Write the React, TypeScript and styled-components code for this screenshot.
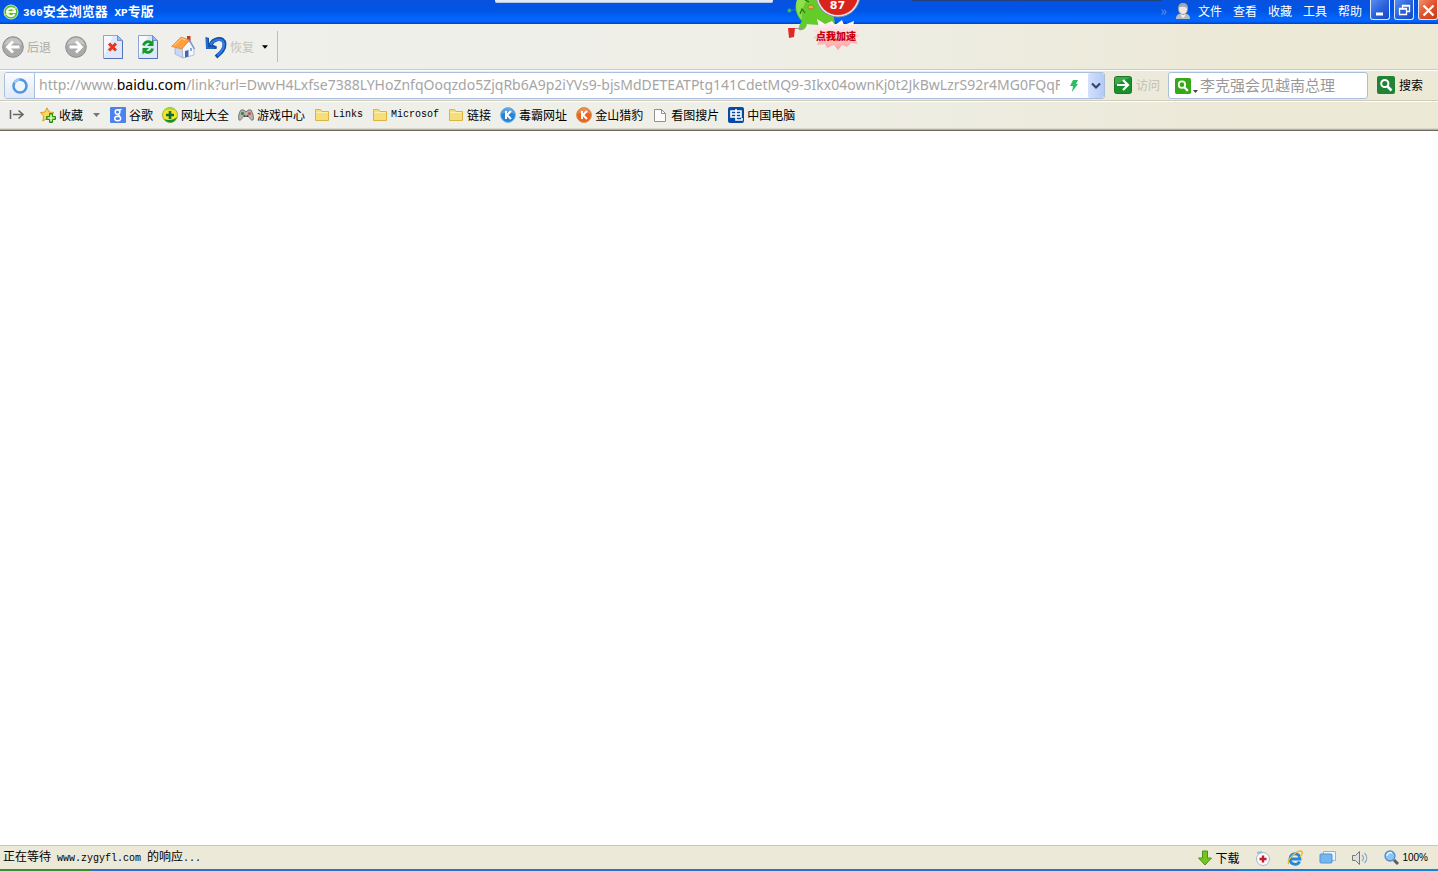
import React from 'react';
import styled, { createGlobalStyle } from 'styled-components';

const cjk = `"Noto Sans CJK SC", sans-serif`;

const GlobalStyle = createGlobalStyle`
  * { box-sizing: border-box; }
  body { margin: 0; background: #fff; font: 12px/16px ${cjk}; color: #000; }
  button, input { font: inherit; color: inherit; margin: 0; padding: 0; border: 0; background: none; }
  button { display: flex; align-items: center; cursor: pointer; white-space: nowrap; }
  svg { display: block; flex: none; }
`;

const Window = styled.div`
  display: flex;
  flex-direction: column;
  min-height: 100vh;
  overflow: hidden;
`;

const TitleBar = styled.header`
  position: relative;
  display: flex;
  justify-content: space-between;
  height: 24px;
  padding-left: 3px;
  color: #fff;
  background: linear-gradient(#0a50d8 0, #0553e4 3px, #0054e3 10px, #0264fb 18px, #0566ff 21px, #0040c4 24px);
`;

const Title = styled.h1`
  display: flex;
  align-items: center;
  gap: 4px;
  margin: 0;
  font-size: 13px;
  line-height: 24px;
  font-weight: 700;
  white-space: pre;
`;

const Latin = styled.span`
  font-family: "Liberation Mono", monospace;
  font-size: 10px;
`;

const TitleLatin = styled.span`
  font-family: "Liberation Mono", monospace;
  font-size: 11px;
`;

const TitleRight = styled.div`
  display: flex;
  align-items: flex-start;
`;

const Menu = styled.nav`
  display: flex;
  align-items: center;
  gap: 11px;
  height: 22px;
  padding: 0 8px 0 7px;
`;

const More = styled.button`
  && { height: 20px; padding-right: 8px; font-size: 14px; color: #5f93e8; }
`;

const UserButton = styled.button`
  && { height: 22px; }
`;

const WindowButtons = styled.div`
  display: flex;
  gap: 4px;
`;

const WindowButton = styled.button<{ $close?: boolean }>`
  && {
    justify-content: center;
    width: 20px;
    height: 20px;
    border: 1px solid #dfe8fb;
    border-top: 0;
    border-radius: 0 0 3px 3px;
    background: ${(p) =>
      p.$close
        ? 'linear-gradient(135deg, #f0906c, #e0512a 50%, #c83c14)'
        : 'linear-gradient(135deg, #5b8df0, #2a62dd 50%, #1648c0)'};
  }
`;

const TopPanel = styled.div`
  position: absolute;
  top: 0;
  left: 495px;
  width: 278px;
  height: 3px;
  background: #e2e8f4;
  border-radius: 0 0 2px 2px;
  border-bottom: 1px solid #b5c5e6;
`;

const DarkEdge = styled.div`
  position: absolute;
  top: 0;
  left: 912px;
  right: 276px;
  height: 1px;
  background: #22427f;
`;

const Booster = styled.button`
  && {
    position: absolute;
    z-index: 2;
    top: 0;
    left: 784px;
    display: block;
    width: 80px;
    height: 54px;
  }
`;

const Score = styled.span`
  position: absolute;
  top: -2px;
  left: 31px;
  width: 45px;
  text-align: center;
  font: 700 11px/16px "DejaVu Sans", sans-serif;
  color: #fff;
`;

const BoostLabel = styled.span`
  position: absolute;
  top: 27px;
  left: 32px;
  width: 40px;
  text-align: center;
  font: 900 10px/18px ${cjk};
  white-space: nowrap;
  color: #c8000c;
`;

const chrome = `linear-gradient(90deg, #eff0ed 0, #efefe8 50%, #ece9d8 85%, #ece9d6 100%)`;

const Toolbar = styled.div`
  display: flex;
  align-items: center;
  height: 46px;
  padding-left: 2px;
  background: ${chrome};
  border-bottom: 1px solid #cfccbc;
`;

const ToolButton = styled.button<{ $space: number; $faint?: boolean }>`
  && {
    gap: 3px;
    height: 34px;
    margin-right: ${(p) => p.$space}px;
    color: ${(p) => (p.$faint ? '#c6c5bd' : '#acaba4')};
  }
`;

const ToolDivider = styled.div`
  width: 1px;
  height: 31px;
  margin-left: 9px;
  background: #c0bda9;
`;

const AddressRow = styled.div`
  display: flex;
  align-items: center;
  height: 31px;
  padding: 0 15px 0 4px;
  background: ${chrome};
  border-top: 1px solid #fff;
  border-bottom: 1px solid #cfccbc;
`;

const Field = styled.div`
  display: flex;
  align-items: center;
  height: 27px;
  background: #fff;
  border: 1px solid #a9bfdc;
  border-radius: 3px;
  overflow: hidden;
`;

const AddressField = styled(Field)`
  flex: 1;
  min-width: 0;
`;

const SiteButton = styled.button`
  && {
    justify-content: center;
    width: 30px;
    height: 25px;
    margin-right: 4px;
    border-right: 1px solid #a9bfdc;
    background: linear-gradient(#fbfcff, #dfe9f8);
  }
`;

const UrlLabel = styled.label`
  padding-bottom: 2px;
  font: 14px/22px "Noto Sans", sans-serif;
  color: #a5a5a5;
  white-space: nowrap;
`;

const Host = styled.span`
  color: #000;
`;

const UrlInput = styled.input`
  && {
    flex: 1;
    min-width: 0;
    height: 24px;
    padding-bottom: 2px;
    font: 14px/22px "Noto Sans", sans-serif;
    color: #a5a5a5;
    outline: 0;
  }
`;

const FlashButton = styled.button`
  && { justify-content: center; width: 28px; height: 24px; }
`;

const HistoryButton = styled.button`
  && {
    justify-content: center;
    width: 16px;
    height: 25px;
    border-radius: 2px;
    background: linear-gradient(90deg, #d3e0fd, #b4caf7);
  }
`;

const GoButton = styled.button<{ $muted?: boolean }>`
  && {
    gap: 4px;
    margin-left: 9px;
    padding-bottom: 1px;
    color: ${(p) => (p.$muted ? '#c2bfb0' : '#000')};
  }
`;

const SearchField = styled(Field)`
  width: 200px;
  margin-left: 8px;
  padding-left: 6px;
`;

const SearchInput = styled.input`
  && {
    flex: 1;
    min-width: 0;
    height: 24px;
    padding-bottom: 2px;
    font-size: 15px;
    color: #999;
    outline: 0;
  }
`;

const Favorites = styled.nav`
  display: flex;
  align-items: center;
  gap: 9px;
  height: 30px;
  padding: 0 0 2px 9px;
  background: ${chrome};
  border-top: 1px solid #fff;
  border-bottom: 1px solid #6a685e;
  box-shadow: inset 0 -1px #b5b2a2, inset 0 -2px #dbd8ca;
`;

const FavoriteButton = styled.button`
  && { gap: 3px; }
`;

const PinButton = styled.button`
  && { margin-right: 6px; }
`;

const FavoriteLink = styled.a`
  display: flex;
  align-items: center;
  gap: 3px;
  color: #000;
  text-decoration: none;
  white-space: nowrap;
`;

const FavoriteLatin = styled(Latin)`
  line-height: 16px;
`;

const Page = styled.main`
  flex: 1;
  background: #fff;
`;

const StatusBar = styled.footer`
  display: flex;
  align-items: center;
  justify-content: space-between;
  height: 24px;
  padding: 0 10px 0 3px;
  background: #ece9d8;
  border-top: 1px solid #c9c6b6;
`;

const StatusText = styled.span`
  white-space: pre;
`;

const StatusTools = styled.div`
  display: flex;
  align-items: center;
  gap: 16px;
`;

const StatusButton = styled.button`
  && { gap: 3px; }
`;

const Percent = styled.span`
  font: 10px/16px "Liberation Sans", sans-serif;
`;

const Taskbar = styled.div`
  height: 2px;
  background: linear-gradient(90deg, #3b8b36 0, #3b8b36 92px, #2f6fd0 92px, #2f6fd0 86%, #1583dc 86%);
`;

const Logo = () => (
  <svg width="16" height="16" viewBox="0 0 16 16">
    <circle cx="8" cy="8" r="7" fill="#57bd32" stroke="#c7efb2" />
    <path d="M4 8h8c0-5-7.500-5-8 0 .2 5 6 5 7.500 2" fill="none" stroke="#fff" strokeWidth="2" />
    <path d="M1 11C4 10 10 8 13.500 3" fill="none" stroke="#e9f56a" />
  </svg>
);

const UserIcon = () => (
  <svg width="16" height="18" viewBox="0 0 16 18">
    <path d="M1 17c0-4 2-5 5-5.500h4c3 .5 5 1.500 5 5.500z" fill="#b9bcc2" />
    <path d="M5.500 10h5l-.5 4-2 2-2-2z" fill="#f1f1f1" />
    <ellipse cx="8" cy="7" rx="4.500" ry="5.500" fill="#e8e8e8" stroke="#999ca5" />
    <path d="M3.500 6C3 2 6 1 8 1s5.500 1 4.500 5C10 5 6 4 3.500 6z" fill="#a4a6aa" />
  </svg>
);

const Mascot = () => (
  <svg width="80" height="54" viewBox="0 0 80 54">
    <defs>
      <linearGradient id="burst" x1="0" y1="0" x2="0" y2="1">
        <stop offset="0" stopColor="#fff" />
        <stop offset=".45" stopColor="#fad9d8" />
        <stop offset="1" stopColor="#ff9ea2" />
      </linearGradient>
    </defs>
    <circle cx="5.500" cy="10.500" r="2" fill="#35c13a" />
    <path d="M6 10h7" stroke="#2b78b8" />
    <path d="M13 0C10 7 12 16 18 21c-2 3-4 6-3 9 4 1 7-1 8-6 10 1 21 2 28 0L47 0z" fill="#63cc28" />
    <path d="M13 0c-2 7 0 15 5 20-1-7 1-15 5-20z" fill="#8fe04c" />
    <path d="M16 14l2-5 3 4M21 0l4 2" fill="none" stroke="#28721a" strokeWidth="1.200" />
    <ellipse cx="27" cy="7" rx="3" ry="2" fill="#e5b346" stroke="#9b7125" strokeWidth=".7" />
    <path d="M10 28.500H20" stroke="#999" />
    <path d="M4 28h7l-1 9-5 1z" fill="#e02828" />
    <circle cx="54" cy="-5" r="22" fill="#e6e6e9" stroke="#8390a5" />
    <circle cx="54" cy="-5" r="20" fill="#d9241d" />
    <path
      d="M33 19L41 24 48 21 51 25 58 20 60 25 70 21 69 27 77 28 72 33 76 36 71 38 74 44 67 43 63 47 58 45 54 50 50 45 43 48 41 44 33 45 35 40 29 38 34 34 28 30 35 28z"
      fill="url(#burst)"
    />
  </svg>
);

const RoundArrow = ({ forward = false }: { forward?: boolean }) => (
  <svg width="22" height="24" viewBox="0 0 22 24">
    <circle cx="11" cy="12" r="10.300" fill="#aaa" stroke="#8c8c8c" />
    <path d="M2 10a9.200 9.200 0 0 1 18 0c-5-2-13-2-18 0z" fill="#c4c4c4" />
    <path
      d={forward ? 'M4.500 12h12M11 6.500l5.500 5.500-5.500 5.500' : 'M17.500 12h-12M11 6.500L5.500 12l5.500 5.500'}
      fill="none"
      stroke="#fff"
      strokeWidth="2.800"
    />
  </svg>
);

const Sheet = ({ children }: { children: React.ReactNode }) => (
  <svg width="20" height="24" viewBox="0 0 20 24">
    <path d="M.5.500h14l5 5v18H.5z" fill="#dde8fd" stroke="#8ea4d4" />
    <path d="M1 1h9L1 21z" fill="#fff" opacity=".7" />
    <path d="M14.500.500v5h5z" fill="#9db9ee" stroke="#7590ca" />
    <path d="M19.500 6v17.500H1" fill="none" stroke="#5573b4" />
    {children}
  </svg>
);

const HomeIcon = () => (
  <svg width="24" height="24" viewBox="0 0 24 24">
    <path d="M16 1h3.500v7H16z" fill="#c03a24" />
    <path d="M4 12l8 2v9l-8-4z" fill="#c9d8f5" stroke="#8a9fd0" strokeWidth=".6" />
    <path d="M11 13l7-7 5 8v6l-11 3z" fill="#f3f7ff" stroke="#9aabd4" strokeWidth=".7" />
    <path d="M.5 11.500L10 2l8.500 3L11 14z" fill="#ffa040" stroke="#e08638" strokeWidth=".7" />
    <path d="M3 10.500l7.500-7 4 1.500" fill="none" stroke="#ffd08b" />
    <path d="M18.500 5l5 9" stroke="#8297c8" strokeWidth="1.400" />
    <path d="M14 16l3.500-1v6.500l-3.500 1z" fill="#4a65a6" />
    <path d="M19 13h2v3h-2z" fill="#8aacd9" />
  </svg>
);

const UndoIcon = () => (
  <svg width="22" height="24" viewBox="0 0 22 24">
    <path d="M5 11C8 3 19 1 19.500 9c.2 6-4 9-8.500 13" fill="none" stroke="#1450a8" strokeWidth="4" />
    <path d="M.5 2l3.500 1v5l8 3.500-.5 2.500H1z" fill="#1450a8" />
    <path d="M5.500 10C8 4.500 18 2 19 9c0 5-3 8-6.500 11.500" fill="none" stroke="#2f7fe4" strokeWidth="2" />
    <path d="M2 3.500V13h7" fill="none" stroke="#2f7fe4" strokeWidth="1.200" />
  </svg>
);

const Caret = ({ color, width = 7 }: { color: string; width?: number }) => (
  <svg width={width} height="4" viewBox="0 0 7 4">
    <path d="M0 0h7L3.500 4z" fill={color} />
  </svg>
);

const GoIcon = () => (
  <svg width="18" height="18" viewBox="0 0 18 18">
    <rect x=".5" y=".5" width="17" height="17" rx="2" fill="#16912b" stroke="#1c742d" />
    <path d="M1 9V1h16z" fill="#5bb55f" opacity=".6" />
    <path d="M3 9h11M9 4l5 5-5 5" fill="none" stroke="#fff" strokeWidth="2.200" />
  </svg>
);

const SearchIcon = ({ size, color }: { size: number; color: string }) => (
  <svg width={size} height={size} viewBox="0 0 18 18">
    <rect width="18" height="18" rx="2" fill={color} />
    <circle cx="7.800" cy="7.500" r="3.600" fill="none" stroke="#fff" strokeWidth="2" />
    <path d="M10.500 10.500l4 4" stroke="#fff" strokeWidth="2.500" />
  </svg>
);

const StarIcon = () => (
  <svg width="16" height="16" viewBox="0 0 16 16">
    <path d="M7 .8l2 4.200 5 .5-3.700 3.400 1 5L7 11.500 2.800 14l.9-5L.5 5.600 5 5z" fill="#ffd65c" stroke="#d89b2c" />
    <path d="M9.500 6.500h3v3h3v3h-3v3h-3v-3h-3v-3h3z" fill="#68c829" stroke="#2b8d14" />
    <path d="M11 8v6M8 11h6" stroke="#f1ffe8" strokeWidth="1.200" />
  </svg>
);

const GoogleIcon = () => (
  <svg width="16" height="16" viewBox="0 0 16 16">
    <rect width="16" height="16" rx="1" fill="#4c82ee" />
    <circle cx="7.500" cy="5" r="2.300" fill="none" stroke="#fff" strokeWidth="1.500" />
    <path d="M9 3l2.500-.5M8 7.500l2 2" stroke="#fff" strokeWidth="1.300" />
    <ellipse cx="7.700" cy="11.500" rx="3" ry="2.200" fill="none" stroke="#fff" strokeWidth="1.400" />
  </svg>
);

const PlusBall = () => (
  <svg width="16" height="16" viewBox="0 0 16 16">
    <circle cx="8" cy="8" r="7.500" fill="#f4e52c" stroke="#9eb52c" />
    <path d="M2 12c3 5 11 5 13-2-3 3-9 4-13 2z" fill="#199037" />
    <path d="M2 4C6-1 12 0 14 4c-4-2-8-2-12 0z" fill="#a4d63c" />
    <path d="M8 4v8M4 8h8" stroke="#136d2c" strokeWidth="2.600" />
  </svg>
);

const GamepadIcon = () => (
  <svg width="16" height="16" viewBox="0 0 16 16">
    <path d="M3 3h3l1 1.500h2L10 3h3c2 3 3 8 2 10-2 1-3-2-4.500-3.500h-5C4 11 3 14 1 13 0 11 1 5 3 3z" fill="#b5b6b4" stroke="#74766f" />
    <circle cx="4.500" cy="6.500" r="1.700" fill="#42864a" />
    <circle cx="11.500" cy="6.500" r="1.600" fill="#cf4c45" />
    <circle cx="6.500" cy="9" r="1" fill="#444" />
    <circle cx="9.500" cy="9" r="1" fill="#444" />
  </svg>
);

const FolderIcon = () => (
  <svg width="16" height="16" viewBox="0 0 16 16">
    <path d="M1.500 2.500h5l1.500 2h6.500v9h-13z" fill="#f7de7d" stroke="#dcb444" />
    <path d="M2.500 5.500h11" stroke="#fff0ae" />
  </svg>
);

const KIcon = ({ fill, edge }: { fill: string; edge: string }) => (
  <svg width="16" height="16" viewBox="0 0 16 16">
    <circle cx="8" cy="8" r="7.400" fill={fill} stroke={edge} />
    <path d="M2 7a6 6 0 0 1 12 0c-3-2-9-2-12 0z" fill="#fff" opacity=".25" />
    <path d="M6 4v8M11 4L7 8l4 4" fill="none" stroke="#fff" strokeWidth="2" />
  </svg>
);

const PageIcon = () => (
  <svg width="16" height="16" viewBox="0 0 16 16">
    <path d="M2.500 2.500h7l4 4v8h-11z" fill="#fcfcfc" stroke="#929292" />
    <path d="M9.500 2.500v4h4" fill="none" stroke="#929292" />
  </svg>
);

const PcIcon = () => (
  <svg width="16" height="16" viewBox="0 0 16 16">
    <rect width="16" height="16" rx="2" fill="#064aa3" />
    <path d="M3 4h10v6H3zM3 7h10M8 2v11h6v-2" fill="none" stroke="#fff" strokeWidth="1.600" />
  </svg>
);

const DownloadIcon = () => (
  <svg width="14" height="16" viewBox="0 0 14 16">
    <path d="M4.500 1h5v7h4L7 15 .5 8h4z" fill="#74c522" stroke="#4b9519" />
  </svg>
);

const DoctorIcon = () => (
  <svg width="16" height="16" viewBox="0 0 16 16">
    <circle cx="8" cy="9" r="6.500" fill="#f8faff" stroke="#a9b7cd" />
    <path d="M2 3l5-1" stroke="#93bce5" strokeWidth="2" />
    <path d="M8 5.500v7M4.500 9h7" stroke="#c91c22" strokeWidth="2.400" />
  </svg>
);

const IeIcon = () => (
  <svg width="16" height="16" viewBox="0 0 16 16">
    <path d="M3.500 9h9.500c0-7-9.800-7-10 0 .2 6 7.500 7 9.500 2.500" fill="none" stroke="#2389db" strokeWidth="2.900" />
    <path d="M2 14C-1 11 8 1 14 1c3 1 0 5-1 6" fill="none" stroke="#edb83b" strokeWidth="1.400" />
  </svg>
);

const WindowsIcon = () => (
  <svg width="17" height="16" viewBox="0 0 17 16">
    <path d="M4.500 1.500h12v9h-12z" fill="#e9f5ff" stroke="#8ab8dd" />
    <rect x="1" y="4" width="12" height="9" rx="1" fill="#75b6ef" stroke="#4f93cf" />
  </svg>
);

const SpeakerIcon = () => (
  <svg width="16" height="16" viewBox="1 0 16 16">
    <path d="M1.500 5.500h3l4-4v13l-4-4h-3z" fill="#dedfe0" stroke="#777" />
    <path d="M11 5c2 2 2 4 0 6M13.500 3c3 3 3 7 0 10" fill="none" stroke="#84a5ca" strokeWidth="1.200" />
  </svg>
);

const ZoomIcon = () => (
  <svg width="15" height="16" viewBox="0 0 15 16">
    <circle cx="6" cy="6" r="5" fill="#8ac5f4" stroke="#548bc7" strokeWidth="1.300" />
    <path d="M3 6c0-3 3-4 5-3" fill="none" stroke="#e3f5ff" strokeWidth="1.500" />
    <path d="M10 10l4 4" stroke="#565b65" strokeWidth="3" />
  </svg>
);

const favorites = [
  { label: '谷歌', icon: <GoogleIcon /> },
  { label: '网址大全', icon: <PlusBall /> },
  { label: '游戏中心', icon: <GamepadIcon /> },
  { label: 'Links', icon: <FolderIcon />, latin: true },
  { label: 'Microsof', icon: <FolderIcon />, latin: true },
  { label: '链接', icon: <FolderIcon /> },
  { label: '毒霸网址', icon: <KIcon fill="#2784d4" edge="#78b5e5" /> },
  { label: '金山猎豹', icon: <KIcon fill="#ea651d" edge="#d68d48" /> },
  { label: '看图搜片', icon: <PageIcon /> },
  { label: '中国电脑', icon: <PcIcon /> },
];

export default function App() {
  return (
    <Window>
      <GlobalStyle />
      <TitleBar>
        <Title>
          <Logo />
          <span>
            <TitleLatin>360</TitleLatin>安全浏览器<TitleLatin> XP</TitleLatin>专版
          </span>
        </Title>
        <TopPanel />
        <DarkEdge />
        <Booster>
          <Mascot />
          <Score>87</Score>
          <BoostLabel>点我加速</BoostLabel>
        </Booster>
        <TitleRight>
          <More>»</More>
          <UserButton aria-label="用户">
            <UserIcon />
          </UserButton>
          <Menu>
            {['文件', '查看', '收藏', '工具', '帮助'].map((name) => (
              <button key={name}>{name}</button>
            ))}
          </Menu>
          <WindowButtons>
            <WindowButton aria-label="最小化">
              <svg width="17" height="17" viewBox="0 0 17 17">
                <path d="M4 13h7" stroke="#fff" strokeWidth="3" />
              </svg>
            </WindowButton>
            <WindowButton aria-label="还原">
              <svg width="17" height="17" viewBox="0 0 17 17">
                <path d="M6.500 7V4.500h7v6H11M3.500 7.500h7v6h-7zM6 5h8M3 8h8" fill="none" stroke="#fff" strokeWidth="1.300" />
              </svg>
            </WindowButton>
            <WindowButton $close aria-label="关闭">
              <svg width="17" height="17" viewBox="0 0 17 17">
                <path d="M3.500 4.500l10 10M13.500 4.500l-10 10" stroke="#fff" strokeWidth="2.300" />
              </svg>
            </WindowButton>
          </WindowButtons>
        </TitleRight>
      </TitleBar>

      <Toolbar>
        <ToolButton $space={14}>
          <RoundArrow />
          后退
        </ToolButton>
        <ToolButton $space={16} aria-label="前进">
          <RoundArrow forward />
        </ToolButton>
        <ToolButton $space={15} aria-label="停止">
          <Sheet>
            <path d="M6 8.500l7 7M13 8.500l-7 7" stroke="#ee3219" strokeWidth="3" />
          </Sheet>
        </ToolButton>
        <ToolButton $space={13} aria-label="刷新">
          <Sheet>
            <path d="M5.500 10.500c1-4 5-4.500 7.500-3M14.500 13.500c-1 4-5 4.500-7.500 3" fill="none" stroke="#129a27" strokeWidth="2.800" />
            <path d="M15.500 4.500v6.500H9zM4.500 19.500V13H11z" fill="#129a27" />
          </Sheet>
        </ToolButton>
        <ToolButton $space={10} aria-label="主页">
          <HomeIcon />
        </ToolButton>
        <ToolButton $space={8} $faint>
          <UndoIcon />
          恢复
        </ToolButton>
        <button aria-label="恢复列表">
          <Caret color="#000" width={6} />
        </button>
        <ToolDivider />
      </Toolbar>

      <AddressRow>
        <AddressField>
          <SiteButton aria-label="网站信息">
            <svg width="16" height="16" viewBox="0 0 16 16">
              <circle cx="8" cy="8" r="6.500" fill="#edf6ff" stroke="#5396df" strokeWidth="2.600" />
              <path d="M2.500 5a6 6 0 0 1 5-3.500" fill="none" stroke="#a2cbf5" strokeWidth="2" />
            </svg>
          </SiteButton>
          <UrlLabel htmlFor="url">
            http://www.<Host>baidu.com</Host>
          </UrlLabel>
          <UrlInput
            id="url"
            defaultValue="/link?url=DwvH4Lxfse7388LYHoZnfqOoqzdo5ZjqRb6A9p2iYVs9-bjsMdDETEATPtg141CdetMQ9-3Ikx04ownKj0t2JkBwLzrS92r4MG0FQqF"
          />
          <FlashButton aria-label="极速模式">
            <svg width="10" height="14" viewBox="0 0 10 14">
              <path d="M4 1h5L7 5h2l-6 8 1-6H1z" fill="#2fbd64" />
            </svg>
          </FlashButton>
          <HistoryButton aria-label="地址列表">
            <svg width="10" height="8" viewBox="0 0 10 8">
              <path d="M1 1.500l4 4 4-4" fill="none" stroke="#31466e" strokeWidth="2.200" />
            </svg>
          </HistoryButton>
        </AddressField>
        <GoButton $muted>
          <GoIcon />
          访问
        </GoButton>
        <SearchField>
          <button aria-label="搜索引擎">
            <SearchIcon size={16} color="#37a818" />
          </button>
          <svg width="9" height="16" viewBox="0 0 9 16">
            <path d="M2 12h5L4.500 15z" fill="#444" />
          </svg>
          <SearchInput aria-label="搜索内容" defaultValue="李克强会见越南总理" />
        </SearchField>
        <GoButton>
          <SearchIcon size={18} color="#218335" />
          搜索
        </GoButton>
      </AddressRow>

      <Favorites>
        <PinButton aria-label="收起收藏栏">
          <svg width="16" height="16" viewBox="0 0 16 16">
            <path d="M1.500 3v9M4 7.500h10M9.500 3.500l4.500 4-4.500 4" fill="none" stroke="#666" strokeWidth="1.600" />
          </svg>
        </PinButton>
        <FavoriteButton>
          <StarIcon />
          收藏
        </FavoriteButton>
        <FavoriteButton aria-label="收藏列表">
          <Caret color="#777" width={9} />
        </FavoriteButton>
        {favorites.map((item) => (
          <FavoriteLink key={item.label} href="#">
            {item.icon}
            {item.latin ? <FavoriteLatin>{item.label}</FavoriteLatin> : item.label}
          </FavoriteLink>
        ))}
      </Favorites>

      <Page />

      <StatusBar>
        <StatusText>
          正在等待<Latin> www.zygyfl.com </Latin>的响应<Latin>...</Latin>
        </StatusText>
        <StatusTools>
          <StatusButton>
            <DownloadIcon />
            下载
          </StatusButton>
          <StatusButton aria-label="浏览器医生">
            <DoctorIcon />
          </StatusButton>
          <StatusButton aria-label="切换内核">
            <IeIcon />
          </StatusButton>
          <StatusButton aria-label="窗口">
            <WindowsIcon />
          </StatusButton>
          <StatusButton aria-label="声音">
            <SpeakerIcon />
          </StatusButton>
          <StatusButton>
            <ZoomIcon />
            <Percent>100%</Percent>
          </StatusButton>
        </StatusTools>
      </StatusBar>
      <Taskbar />
    </Window>
  );
}
